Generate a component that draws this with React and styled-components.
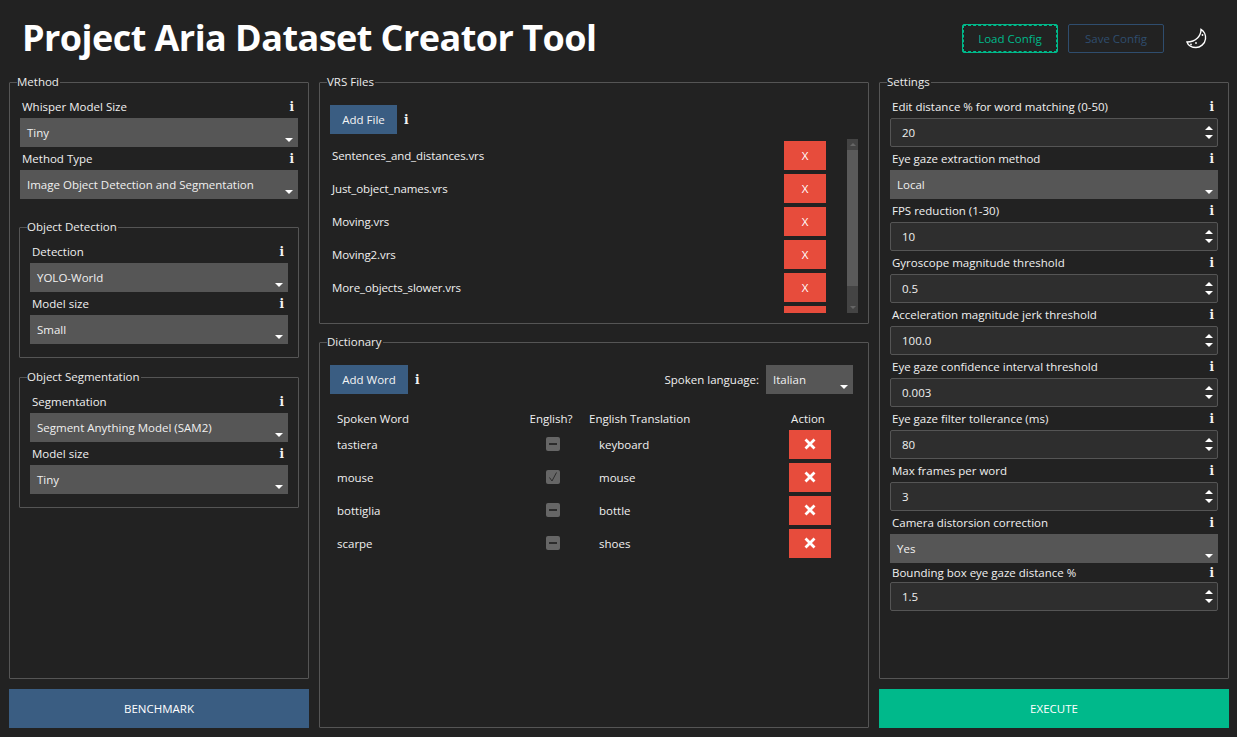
import React from 'react';
import styled, { createGlobalStyle } from 'styled-components';

const GlobalStyle = createGlobalStyle`
  html, body {
    margin: 0;
    padding: 0;
    height: 100%;
    background: #222222;
    overflow: hidden;
  }
  * {
    box-sizing: border-box;
  }
`;

const Page = styled.div`
  width: 1237px;
  height: 737px;
  background: #222222;
  color: #f0f0f0;
  font-family: 'Open Sans', 'Liberation Sans', sans-serif;
  font-size: 11.5px;
  display: flex;
  flex-direction: column;
`;
const Header = styled.div`
  height: 82px;
  display: flex;
  align-items: flex-start;
  justify-content: space-between;
  padding: 24px 30px 0 22px;
`;
const Title = styled.h1`
  margin: -9px 0 0;
  font-size: 36px;
  line-height: 46px;
  font-weight: 700;
  letter-spacing: -0.55px;
  color: #ffffff;
`;
const HeaderActions = styled.div`
  display: flex;
  align-items: center;
  gap: 10px;
`;
const ConfigButton = styled.div`
  position: relative;
  width: 96px;
  height: 29px;
  display: flex;
  align-items: center;
  justify-content: center;
  padding-bottom: 1px;
  border: 1px solid ${(p) => (p.$active ? '#00b98b' : '#2f4d6e')};
  border-radius: 2px;
  color: ${(p) => (p.$active ? '#00b98b' : '#2f4d6e')};
  &::after {
    content: '';
    display: ${(p) => (p.$active ? 'block' : 'none')};
    position: absolute;
    inset: 0;
    border: 1px dashed #00b98b;
  }
`;
const MoonIcon = styled.svg`
  width: 21px;
  height: 21px;
  margin-left: 12px;
`;
const Main = styled.div`
  flex: 1;
  display: flex;
  gap: 10px;
  padding: 0 8px 9px 9px;
`;
const Column = styled.div`
  width: ${(p) => p.$width}px;
  display: flex;
  flex-direction: column;
  gap: ${(p) => p.$gap || 10}px;
`;
const GroupBox = styled.div`
  position: relative;
  border: 1px solid #555555;
  border-radius: 1px;
  flex: ${(p) => (p.$height ? 'none' : 1)};
  height: ${(p) => (p.$height ? `${p.$height}px` : 'auto')};
  padding: ${(p) => p.$padding || '12px 10px 13px'};
`;
const Legend = styled.div`
  position: absolute;
  top: -10px;
  left: 7px;
  line-height: 17px;
  background: #222222;
  padding: 0 1px 0 0;
  color: #ececec;
`;
const NestedGroup = styled(GroupBox)`
  flex: none;
  margin: ${(p) => p.$top}px -1px 0;
`;
const Info = styled.span`
  font-family: 'DejaVu Serif', serif;
  font-weight: 700;
  font-size: 12px;
  line-height: 12px;
  color: #f4f4f4;
  margin-left: ${(p) => p.$left || 0}px;
`;
const LabelRow = styled.div`
  height: ${(p) => (p.$tight ? 19 : 23)}px;
  display: flex;
  align-items: center;
  justify-content: space-between;
  padding: 0 4px 1px 2px;
  color: #f0f0f0;
  ${Info} {
    margin-top: 2px;
  }
`;
const Select = styled.div`
  position: relative;
  height: 29px;
  width: ${(p) => (p.$width ? `${p.$width}px` : 'auto')};
  background: #565656;
  display: flex;
  align-items: center;
  padding: 0 0 1px 7px;
  color: #f0f0f0;
  &::after {
    content: '';
    position: absolute;
    right: 5px;
    bottom: 5px;
    border-left: 4px solid transparent;
    border-right: 4px solid transparent;
    border-top: 4px solid #ffffff;
  }
`;
const Spin = styled.div`
  height: 29px;
  background: #2e2e2e;
  border: 1px solid #555555;
  border-radius: 2px;
  display: flex;
  align-items: center;
  justify-content: space-between;
  padding: 0 4px 1px 11px;
`;
const SpinArrows = styled.div`
  display: flex;
  flex-direction: column;
  gap: 5px;
`;
const Arrow = styled.div`
  border-left: 4px solid transparent;
  border-right: 4px solid transparent;
  ${(p) => (p.$up ? 'border-bottom' : 'border-top')}: 4px solid #ffffff;
`;
const WideButton = styled.div`
  height: 39px;
  display: flex;
  align-items: center;
  justify-content: center;
  padding-bottom: 1px;
  background: ${(p) => p.$color};
  color: #ffffff;
`;
const BlueButton = styled.div`
  width: ${(p) => p.$width}px;
  height: 29px;
  background: #3a5d82;
  color: #f4f4f4;
  display: flex;
  align-items: center;
  justify-content: center;
  padding-bottom: 1px;
`;
const Toolbar = styled.div`
  display: flex;
  align-items: center;
`;
const Spacer = styled.div`
  flex: 1;
`;
const LanguageLabel = styled.span`
  margin: 0 7px 1px 0;
`;
const FileArea = styled.div`
  display: flex;
  margin-top: 5px;
  height: 174px;
`;
const FileList = styled.div`
  flex: 1;
  overflow: hidden;
  display: flex;
  flex-direction: column;
  gap: 4px;
  padding: 2px 21px 0 2px;
`;
const FileRow = styled.div`
  flex: none;
  height: 29px;
  display: flex;
  align-items: center;
  justify-content: space-between;
`;
const FileName = styled.span`
  margin-bottom: 1px;
  letter-spacing: -0.1px;
`;
const DeleteButton = styled.div`
  flex: none;
  width: 42px;
  height: 29px;
  padding-bottom: 1px;
  background: #e74c3c;
  color: #ffffff;
  display: flex;
  align-items: center;
  justify-content: center;
`;
const Scrollbar = styled.div`
  width: 11px;
  display: flex;
  flex-direction: column;
  background: #444444;
`;
const ScrollEnd = styled.div`
  height: ${(p) => p.$height}px;
  display: flex;
  align-items: ${(p) => (p.$top ? 'center' : 'flex-end')};
  justify-content: center;
  padding-bottom: ${(p) => (p.$top ? 0 : 4)}px;
`;
const ScrollThumb = styled.div`
  height: 136px;
  background: #5a5a5a;
`;
const ScrollArrow = styled.div`
  border-left: 3px solid transparent;
  border-right: 3px solid transparent;
  ${(p) => (p.$up ? 'border-bottom' : 'border-top')}: 3px solid #666666;
`;
const HeadRow = styled.div`
  display: grid;
  grid-template-columns: 193px 59px 198px 60px;
  height: 21px;
  margin: 14px 0 1px;
  align-items: center;
`;
const WordRows = styled.div`
  display: flex;
  flex-direction: column;
  gap: 4px;
`;
const WordRow = styled.div`
  display: grid;
  grid-template-columns: 193px 59px 198px 60px;
  height: 29px;
  align-items: center;
`;
const Cell = styled.div`
  padding-left: ${(p) => p.$pad || 0}px;
  padding-right: ${(p) => p.$padRight || 0}px;
  text-align: ${(p) => (p.$center ? 'center' : 'left')};
`;
const CenterCell = styled.div`
  display: flex;
  justify-content: center;
`;
const CheckBox = styled.div`
  width: 14px;
  height: 14px;
  margin-bottom: 1px;
  background: #666666;
  border-radius: 2px;
  display: flex;
  align-items: center;
  justify-content: center;
`;
const Dash = styled.div`
  width: 8px;
  height: 2px;
  background: #2c2c2c;
`;

const Field = ({ label, tight, children }) => (
  <>
    <LabelRow $tight={tight}>
      {label}
      <Info>i</Info>
    </LabelRow>
    {children}
  </>
);

const Spinner = ({ value }) => (
  <Spin>
    {value}
    <SpinArrows>
      <Arrow $up />
      <Arrow />
    </SpinArrows>
  </Spin>
);

const CrossIcon = () => (
  <svg width="12" height="12" viewBox="0 0 12 12">
    <path d="M1.5 1.5 L10.5 10.5 M10.5 1.5 L1.5 10.5" stroke="#ffffff" strokeWidth="2.8" fill="none" />
  </svg>
);

const files = [
  'Sentences_and_distances.vrs',
  'Just_object_names.vrs',
  'Moving.vrs',
  'Moving2.vrs',
  'More_objects_slower.vrs',
];

const words = [
  { spoken: 'tastiera', english: false, translation: 'keyboard' },
  { spoken: 'mouse', english: true, translation: 'mouse' },
  { spoken: 'bottiglia', english: false, translation: 'bottle' },
  { spoken: 'scarpe', english: false, translation: 'shoes' },
];

const settings = [
  { label: 'Edit distance % for word matching (0-50)', value: '20' },
  { label: 'Eye gaze extraction method', value: 'Local', select: true },
  { label: 'FPS reduction (1-30)', value: '10' },
  { label: 'Gyroscope magnitude threshold', value: '0.5' },
  { label: 'Acceleration magnitude jerk threshold', value: '100.0' },
  { label: 'Eye gaze confidence interval threshold', value: '0.003' },
  { label: 'Eye gaze filter tollerance (ms)', value: '80' },
  { label: 'Max frames per word', value: '3' },
  { label: 'Camera distorsion correction', value: 'Yes', select: true },
  { label: 'Bounding box eye gaze distance %', value: '1.5', tight: true },
];

const App = () => {
  return (
    <Page>
      <GlobalStyle />
      <Header>
        <Title>Project Aria Dataset Creator Tool</Title>
        <HeaderActions>
          <ConfigButton $active>Load Config</ConfigButton>
          <ConfigButton>Save Config</ConfigButton>
          <MoonIcon viewBox="0 0 21 21">
            <path
              d="M15 1.5 C18 3 20 7 19.5 11 C19 16 14 19.5 10 19.5 C6 19.5 2 17.5 1 14 C5 14 9 12.5 11.5 10 C14 7.5 15 4.5 15 1.5 Z"
              fill="#222222"
              stroke="#ffffff"
              strokeWidth="1.4"
            />
            <circle cx="5" cy="16.5" r="0.9" fill="#ffffff" />
            <circle cx="10" cy="15" r="0.9" fill="#ffffff" />
            <circle cx="16.5" cy="7" r="0.9" fill="#ffffff" />
          </MoonIcon>
        </HeaderActions>
      </Header>
      <Main>
        <Column $width={300}>
          <GroupBox>
            <Legend>Method</Legend>
            <Field label="Whisper Model Size">
              <Select>Tiny</Select>
            </Field>
            <Field label="Method Type">
              <Select>Image Object Detection and Segmentation</Select>
            </Field>
            <NestedGroup $top={28}>
              <Legend>Object Detection</Legend>
              <Field label="Detection">
                <Select>YOLO-World</Select>
              </Field>
              <Field label="Model size">
                <Select>Small</Select>
              </Field>
            </NestedGroup>
            <NestedGroup $top={19}>
              <Legend>Object Segmentation</Legend>
              <Field label="Segmentation">
                <Select>Segment Anything Model (SAM2)</Select>
              </Field>
              <Field label="Model size">
                <Select>Tiny</Select>
              </Field>
            </NestedGroup>
          </GroupBox>
          <WideButton $color="#3a5d82">BENCHMARK</WideButton>
        </Column>
        <Column $width={550} $gap={18}>
          <GroupBox $height={242} $padding="22px 10px 0">
            <Legend>VRS Files</Legend>
            <Toolbar>
              <BlueButton $width={67}>Add File</BlueButton>
              <Info $left={7}>i</Info>
            </Toolbar>
            <FileArea>
              <FileList>
                {files.map((name) => (
                  <FileRow key={name}>
                    <FileName>{name}</FileName>
                    <DeleteButton>X</DeleteButton>
                  </FileRow>
                ))}
                <FileRow>
                  <FileName />
                  <DeleteButton />
                </FileRow>
              </FileList>
              <Scrollbar>
                <ScrollEnd $height={11} $top>
                  <ScrollArrow $up />
                </ScrollEnd>
                <ScrollThumb />
                <ScrollEnd $height={27}>
                  <ScrollArrow />
                </ScrollEnd>
              </Scrollbar>
            </FileArea>
          </GroupBox>
          <GroupBox $padding="22px 15px 0 10px">
            <Legend>Dictionary</Legend>
            <Toolbar>
              <BlueButton $width={78}>Add Word</BlueButton>
              <Info $left={7}>i</Info>
              <Spacer />
              <LanguageLabel>Spoken language:</LanguageLabel>
              <Select $width={87}>Italian</Select>
            </Toolbar>
            <HeadRow>
              <Cell $pad={7}>Spoken Word</Cell>
              <Cell $center $padRight={3}>English?</Cell>
              <Cell $pad={7}>English Translation</Cell>
              <Cell $center $padRight={4}>Action</Cell>
            </HeadRow>
            <WordRows>
              {words.map((word) => (
                <WordRow key={word.spoken}>
                  <Cell $pad={7}>{word.spoken}</Cell>
                  <CenterCell>
                    <CheckBox>
                      {word.english ? (
                        <svg width="12" height="12" viewBox="0 0 12 12">
                          <path d="M2.5 6.5 L5 10 L9.5 1.5" stroke="#2c2c2c" strokeWidth="1" fill="none" />
                        </svg>
                      ) : (
                        <Dash />
                      )}
                    </CheckBox>
                  </CenterCell>
                  <Cell $pad={17}>{word.translation}</Cell>
                  <CenterCell>
                    <DeleteButton>
                      <CrossIcon />
                    </DeleteButton>
                  </CenterCell>
                </WordRow>
              ))}
            </WordRows>
          </GroupBox>
        </Column>
        <Column $width={350}>
          <GroupBox>
            <Legend>Settings</Legend>
            {settings.map((item) => (
              <Field key={item.label} label={item.label} tight={item.tight}>
                {item.select ? <Select>{item.value}</Select> : <Spinner value={item.value} />}
              </Field>
            ))}
          </GroupBox>
          <WideButton $color="#00b98b">EXECUTE</WideButton>
        </Column>
      </Main>
    </Page>
  );
};

export default App;
